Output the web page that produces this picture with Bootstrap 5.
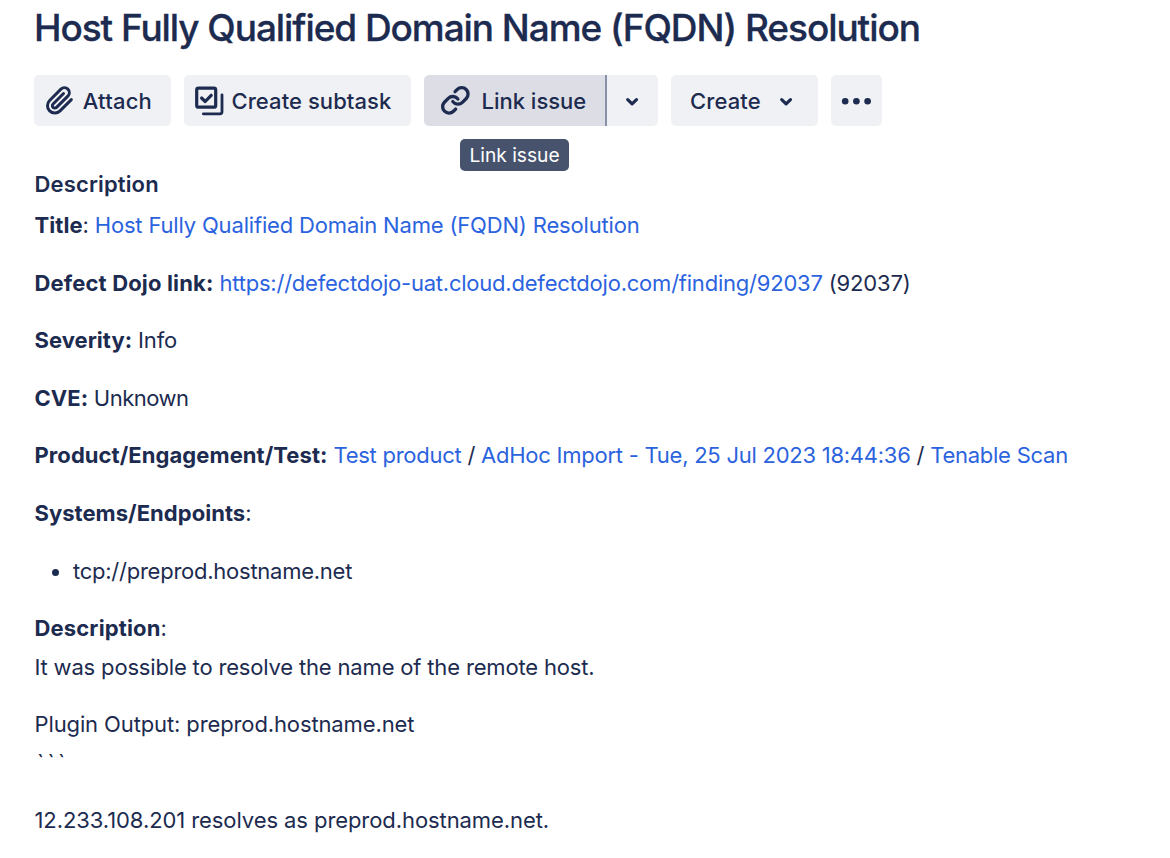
<!DOCTYPE html>
<html lang="en">
<head>
<meta charset="utf-8">
<meta name="viewport" content="width=device-width, initial-scale=1">
<title>Host Fully Qualified Domain Name (FQDN) Resolution</title>
<link href="https://cdn.jsdelivr.net/npm/bootstrap@5.3.0/dist/css/bootstrap.min.css" rel="stylesheet">
<style>
  body { font-family: Inter, "Liberation Sans", sans-serif; font-size: 22px; line-height: 38.4px; color: #1c2b4f; background: #fff; overflow: hidden; }
  .issue { padding: 0 34px; }
  .issue-title { font-size: 37px; font-weight: 500; line-height: 44px; letter-spacing: -1.07px; margin: 6px 0 25px; white-space: nowrap; -webkit-text-stroke: .3px currentColor; }
  .toolbar { gap: 13px; height: 51px; }
  .tool { display: flex; align-items: center; height: 51px; padding: 0; border: 0; border-radius: 5px; background: #f0f1f4; color: #1c2b4f; font-size: 22px; font-weight: 500; line-height: 51px; white-space: nowrap; }
  .tool span { padding-top: 2px; line-height: 49px; }
  .tool:hover { background: #dddee5; color: #1c2b4f; }
  .tool svg { flex: none; fill: none; stroke: currentColor; stroke-linecap: round; stroke-linejoin: round; }
  .tool-attach { width: 137px; padding-left: 11.3px; gap: 8px; letter-spacing: .2px; }
  .tool-subtask { width: 227px; padding-left: 9.5px; gap: 8px; letter-spacing: .07px; }
  .tool-link { width: 181px; padding-left: 16px; gap: 10.8px; background: #dddee5; border-radius: 5px 0 0 5px; }
  .tool-more-links { width: 53px; padding-left: 17px; border-left: 2px solid #8791a8; border-radius: 0 5px 5px 0; }
  .tool-create { width: 147px; padding-left: 19px; gap: 17px; letter-spacing: .1px; }
  .tool-dots { width: 51px; justify-content: center; }
  .tip { position: absolute; left: 36px; top: 64px; width: 109px; height: 32px; border-radius: 5px; background: #47536d; color: #fff; font-size: 19.2px; line-height: 32px; text-align: center; }
  .section-label { font-size: 22px; font-weight: 600; line-height: 32px; letter-spacing: .15px; margin: 41.5px 0 6.6px .5px; }
  .issue p, .issue ul { margin: 0 0 19.2px; letter-spacing: -.17px; white-space: nowrap; }
  .issue p { padding-left: .5px; }
  .issue p b { font-weight: 700; letter-spacing: .15px; }
  .issue p b.tight { letter-spacing: .04px; }
  .issue p.trail { letter-spacing: -.25px; }
  .issue p.trail b { letter-spacing: .07px; }
  .issue p.unit { letter-spacing: -.5px; }
  .issue p.output { letter-spacing: -.12px; }
  .issue p.result { letter-spacing: -.08px; }
  .issue a { color: #2b63de; text-decoration: none; }
  .url { letter-spacing: -.22px; }
  .endpoints li { display: flex; align-items: center; padding-left: 17.5px; gap: 14px; letter-spacing: -.25px; }
  .endpoints li::before { content: ""; width: 7.5px; height: 7.5px; margin-top: 3px; border-radius: 50%; background: currentColor; }
  .fence { letter-spacing: 3.4px; padding-left: 2.5px; }
</style>
</head>
<body>
<main class="issue">
  <h1 class="issue-title">Host Fully Qualified Domain Name (FQDN) Resolution</h1>

  <div class="toolbar d-flex">
    <button class="btn tool tool-attach" type="button">
      <svg width="29.5" height="29.5" viewBox="0 0 24 24" stroke-width="2.4"><path d="M21.44 11.05l-9.19 9.19a6 6 0 0 1-8.49-8.49l9.19-9.19a4 4 0 0 1 5.66 5.66l-9.2 9.19a2 2 0 0 1-2.83-2.83l8.49-8.48"/></svg>
      <span>Attach</span>
    </button>
    <button class="btn tool tool-subtask" type="button">
      <svg width="30" height="30" viewBox="0 0 30 30" stroke-width="3.2"><rect x="2.7" y="2.2" width="19" height="19" rx="1.8"/><path d="M7.6 12l3.6 3.5 6-6.2"/><path stroke-width="2.8" d="M28 8.8v17a2 2 0 0 1-2 2H9.3"/></svg>
      <span>Create subtask</span>
    </button>
    <div class="d-flex position-relative">
      <button class="btn tool tool-link" type="button">
        <svg width="30.7" height="30.7" viewBox="0 0 24 24" stroke-width="2.6"><path d="M10 13a5 5 0 0 0 7.54.54l3-3a5 5 0 0 0-7.07-7.07l-1.72 1.71M14 11a5 5 0 0 0-7.54-.54l-3 3a5 5 0 0 0 7.07 7.07l1.71-1.71"/></svg>
        <span>Link issue</span>
      </button>
      <button class="btn tool tool-more-links" type="button" aria-label="More link options">
        <svg width="16" height="16" viewBox="0 0 16 16" stroke-width="3.2"><path d="M3.7 6.6L8.1 10.8 12.5 6.6"/></svg>
      </button>
      <div class="tip" role="tooltip">Link issue</div>
    </div>
    <button class="btn tool tool-create" type="button">
      <span>Create</span>
      <svg width="16" height="16" viewBox="0 0 16 16" stroke-width="3.2"><path d="M3.7 6.6L8.1 10.8 12.5 6.6"/></svg>
    </button>
    <button class="btn tool tool-dots" type="button" aria-label="More actions">
      <svg width="32" height="10" viewBox="0 0 32 10"><g fill="currentColor" stroke="none"><circle cx="4.2" cy="5.2" r="3.3"/><circle cx="15.4" cy="5.2" r="3.3"/><circle cx="26.6" cy="5.2" r="3.3"/></g></svg>
    </button>
  </div>

  <h2 class="section-label">Description</h2>
  <p><b class="tight">Title</b>: <a href="#">Host Fully Qualified Domain Name (FQDN) Resolution</a></p>
  <p><b>Defect Dojo link:</b> <a class="url" href="#">https://defectdojo-uat.cloud.defectdojo.com/finding/92037</a> (92037)</p>
  <p><b class="tight">Severity:</b> Info</p>
  <p class="unit"><b class="tight">CVE:</b> Unknown</p>
  <p class="trail"><b>Product/Engagement/Test:</b> <a href="#">Test product</a> / <a href="#">AdHoc Import - Tue, 25 Jul 2023 18:44:36</a> / <a href="#">Tenable Scan</a></p>
  <p><b class="tight">Systems/Endpoints</b>:</p>
  <ul class="endpoints list-unstyled"><li>tcp://preprod.hostname.net</li></ul>
  <p><b>Description</b>:<br>It was possible to resolve the name of the remote host.</p>
  <p class="output">Plugin Output: preprod.hostname.net<br><span class="fence">```</span></p>
  <p class="result">12.233.108.201 resolves as preprod.hostname.net.</p>
</main>
<script src="https://cdn.jsdelivr.net/npm/bootstrap@5.3.0/dist/js/bootstrap.bundle.min.js"></script>
</body>
</html>
